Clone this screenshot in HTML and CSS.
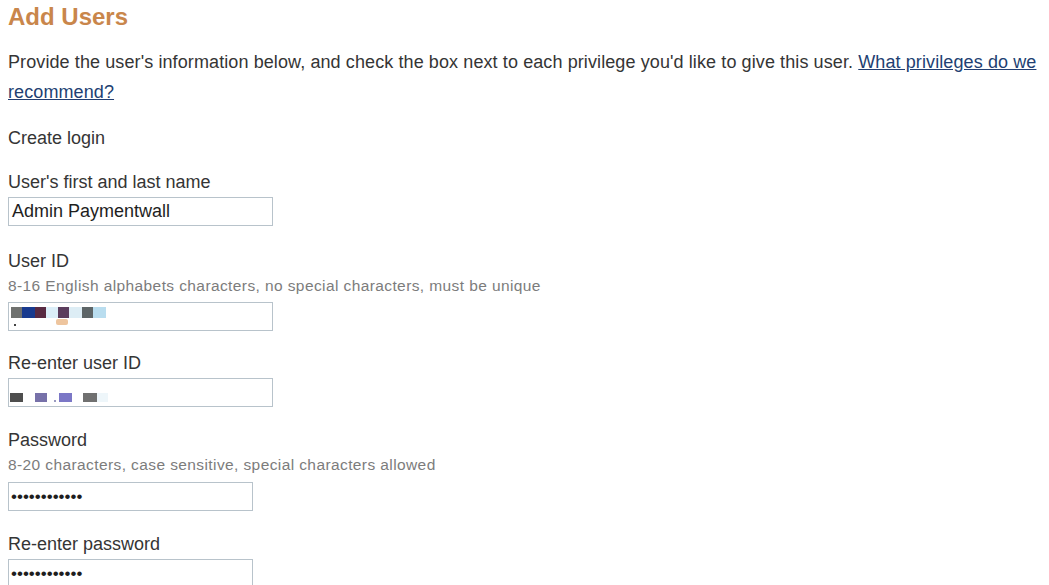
FILE: index.html
```html
<!DOCTYPE html>
<html lang="en">
<head>
<meta charset="utf-8">
<title>Add Users</title>
<link rel="stylesheet" href="styles.css">
</head>
<body>
<main class="page">
  <h1 class="title">Add Users</h1>
  <p class="intro">Provide the user's information below, and check the box next to each privilege you'd like to give this user. <a href="#" class="link">What privileges do we recommend?</a></p>
  <p class="section">Create login</p>

  <div class="field first">
    <label class="label">User's first and last name</label>
    <div class="input wide"><span class="value">Admin Paymentwall</span></div>
  </div>

  <div class="field userid">
    <label class="label">User ID</label>
    <div class="hint">8-16 English alphabets characters, no special characters, must be unique</div>
    <div class="input wide top">
      <span class="blur">
        <i class="px" style="background:#6f716f;width:11px"></i><i class="px" style="background:#183a8e;width:13px"></i><i class="px" style="background:#582a42;width:11px"></i><i class="px" style="background:#dbeef8;width:12px"></i><i class="px" style="background:#5b3d5d;width:11px"></i><i class="px" style="background:#ddedf5;width:13px"></i><i class="px" style="background:#5d6567;width:11px"></i><i class="px" style="background:#b9ddef;width:13px"></i>
      </span>
      <span class="dot"></span><span class="smudge"></span>
    </div>
  </div>

  <div class="field reuser">
    <label class="label">Re-enter user ID</label>
    <div class="input wide low">
      <span class="blur2">
        <i class="px2" style="background:#4e4e4e;width:13px"></i><i class="sp" style="width:12px"></i><i class="px2" style="background:#7771a9;width:12px"></i><i class="sp" style="width:7px"></i><i class="mini"></i><i class="sp" style="width:3px"></i><i class="px2" style="background:#7b77c6;width:13px"></i><i class="sp" style="width:11px"></i><i class="px2" style="background:#707070;width:14px"></i><i class="px2" style="background:#eef6fa;width:11px"></i>
      </span>
    </div>
  </div>

  <div class="field">
    <label class="label">Password</label>
    <div class="hint">8-20 characters, case sensitive, special characters allowed</div>
    <div class="input narrow"><span class="dots">••••••••••••</span></div>
  </div>

  <div class="field">
    <label class="label">Re-enter password</label>
    <div class="input narrow"><span class="dots">••••••••••••</span></div>
  </div>
</main>
</body>
</html>
```

FILE: styles.css
```css
* { box-sizing: border-box; }
html, body { margin: 0; padding: 0; background: #ffffff; }
body {
  font-family: "Liberation Sans", Arial, Helvetica, sans-serif;
  color: #353535;
  font-size: 18px;
}
.page {
  padding: 3px 8px 0 8px;
  display: flex;
  flex-direction: column;
}
.title {
  margin: 0;
  font-size: 24px;
  line-height: 28px;
  font-weight: bold;
  color: #c9864b;
}
.intro {
  margin: 16px 0 0 0;
  line-height: 30px;
  letter-spacing: 0.1px;
}
.link { color: #223f72; text-decoration: underline; }
.section { margin: 21px 0 0 0; line-height: 20px; }
.field { display: flex; flex-direction: column; margin-top: 23px; }
.field.first { margin-top: 24px; }
.field.userid { margin-top: 25px; }
.field.reuser { margin-top: 22px; }
.label { line-height: 20px; }
.hint {
  font-size: 15.5px;
  letter-spacing: 0.4px;
  color: #7c7c7c;
  line-height: 18px;
  margin-top: 6px;
}
.input {
  margin-top: 5px;
  height: 29px;
  border: 1px solid #b8c3cb;
  background: #fff;
  display: flex;
  align-items: center;
  padding: 0 3px;
  position: relative;
}
.hint + .input { margin-top: 8px; }
.userid .hint + .input { margin-top: 7px; }
.wide { width: 265px; }
.narrow { width: 245px; }
.value { font-size: 18px; color: #1e1e1e; }
.dots { font-size: 17px; color: #1e1e1e; margin-left: -1px; }
.top { align-items: flex-start; }
.low { align-items: flex-start; }
.blur { display: flex; margin-top: 4px; margin-left: -1px; }
.px { display: block; height: 11px; }
.dot { position: absolute; left: 5px; top: 21px; width: 2px; height: 2px; background: #444; }
.smudge { position: absolute; left: 47px; top: 16px; width: 12px; height: 6px; background: #eec59e; border-radius: 2px; }
.blur2 { display: flex; align-items: flex-end; margin-top: 14px; margin-left: -2px; }
.px2 { display: block; height: 9px; }
.sp { display: block; height: 9px; }
.mini { display: block; width: 2px; height: 2px; background: #9a9ac0; }
```
